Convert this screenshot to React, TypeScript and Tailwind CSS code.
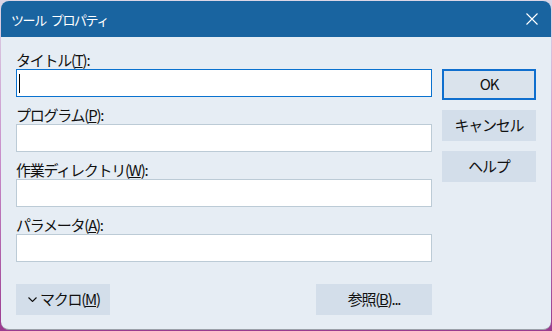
import { ReactNode } from "react";

const font = { fontFamily: '"Noto Sans CJK JP", "Noto Sans", sans-serif' };

interface Field {
  label: string;
  key: string;
  focused?: boolean;
}

const fields: Field[] = [
  { label: "タイトル", key: "T", focused: true },
  { label: "プログラム", key: "P" },
  { label: "作業ディレクトリ", key: "W" },
  { label: "パラメータ", key: "A" },
];

function Accel({ children }: { children: ReactNode }) {
  return <u className="underline underline-offset-[1px] decoration-1">{children}</u>;
}

function SideButton({ children, primary }: { children: ReactNode; primary?: boolean }) {
  return (
    <button
      className={
        primary
          ? "h-[31px] w-[94px] bg-[#dae3ec] border-2 border-[#0f6fce] flex items-center justify-center text-[15px] tracking-[-1.25px] text-[#111]"
          : "h-[31px] w-[94px] bg-[#d3deea] flex items-center justify-center text-[15px] tracking-[-1.25px] text-[#111]"
      }
    >
      {children}
    </button>
  );
}

export default function App() {
  return (
    <div className="w-[552px] h-[331px] bg-gradient-to-b from-[#dcd6e6] via-[#c78ac8] to-[#9a3a8f] pt-px pl-px" style={font}>
      <div className="w-[550px] h-[329px] rounded-[8px] overflow-hidden bg-[#e6edf4] border-b border-[#9aa0a8] flex flex-col">
        <div className="h-[36px] bg-[#1964a0] flex items-center justify-between pl-[10px] pr-[13px] shrink-0">
          <span className="text-white text-[13px] tracking-[-1.4px] leading-none flex">
            <span>ツール</span>
            <span className="ml-[5px]">プロパティ</span>
          </span>
          <svg width="12" height="12" viewBox="0 0 12 12" className="text-white">
            <path d="M0.5 0.5 L11.5 11.5 M11.5 0.5 L0.5 11.5" stroke="currentColor" strokeWidth="1.1" />
          </svg>
        </div>

        <div className="flex-1 flex gap-[10px] pl-[15px] pr-[15px] pt-[15px]">
          <div className="w-[416px] flex flex-col">
            <div className="flex flex-col gap-[10px]">
              {fields.map((f) => (
                <div key={f.key} className="flex flex-col">
                  <div className="h-[17px] text-[15px] leading-[15px] tracking-[-1.25px] text-[#111]">
                    {f.label}(<Accel>{f.key}</Accel>):
                  </div>
                  <div
                    className={
                      f.focused
                        ? "h-[28px] bg-white border border-[#0a72cf] flex items-center pl-[2px]"
                        : "h-[28px] bg-white border border-[#bccbd6]"
                    }
                  >
                    {f.focused && <div className="w-px h-[19px] bg-black" />}
                  </div>
                </div>
              ))}
            </div>

            <div className="mt-[22px] flex justify-between">
              <button className="h-[31px] w-[94px] bg-[#d3deea] flex items-center pl-[12px] gap-[3px] text-[15px] tracking-[-1.25px] text-[#111]">
                <svg width="9" height="5" viewBox="0 0 9 5">
                  <path d="M0.5 0.5 L4.5 4.5 L8.5 0.5" fill="none" stroke="#111" strokeWidth="1.1" />
                </svg>
                <span>
                  マクロ(<Accel>M</Accel>)
                </span>
              </button>
              <button className="h-[31px] w-[116px] bg-[#d3deea] flex items-center justify-center text-[15px] tracking-[-1.25px] text-[#111]">
                参照(<Accel>B</Accel>)...
              </button>
            </div>
          </div>

          <div className="flex flex-col gap-[10px] pt-[17px]">
            <SideButton primary>OK</SideButton>
            <SideButton>キャンセル</SideButton>
            <SideButton>ヘルプ</SideButton>
          </div>
        </div>
      </div>
    </div>
  );
}
